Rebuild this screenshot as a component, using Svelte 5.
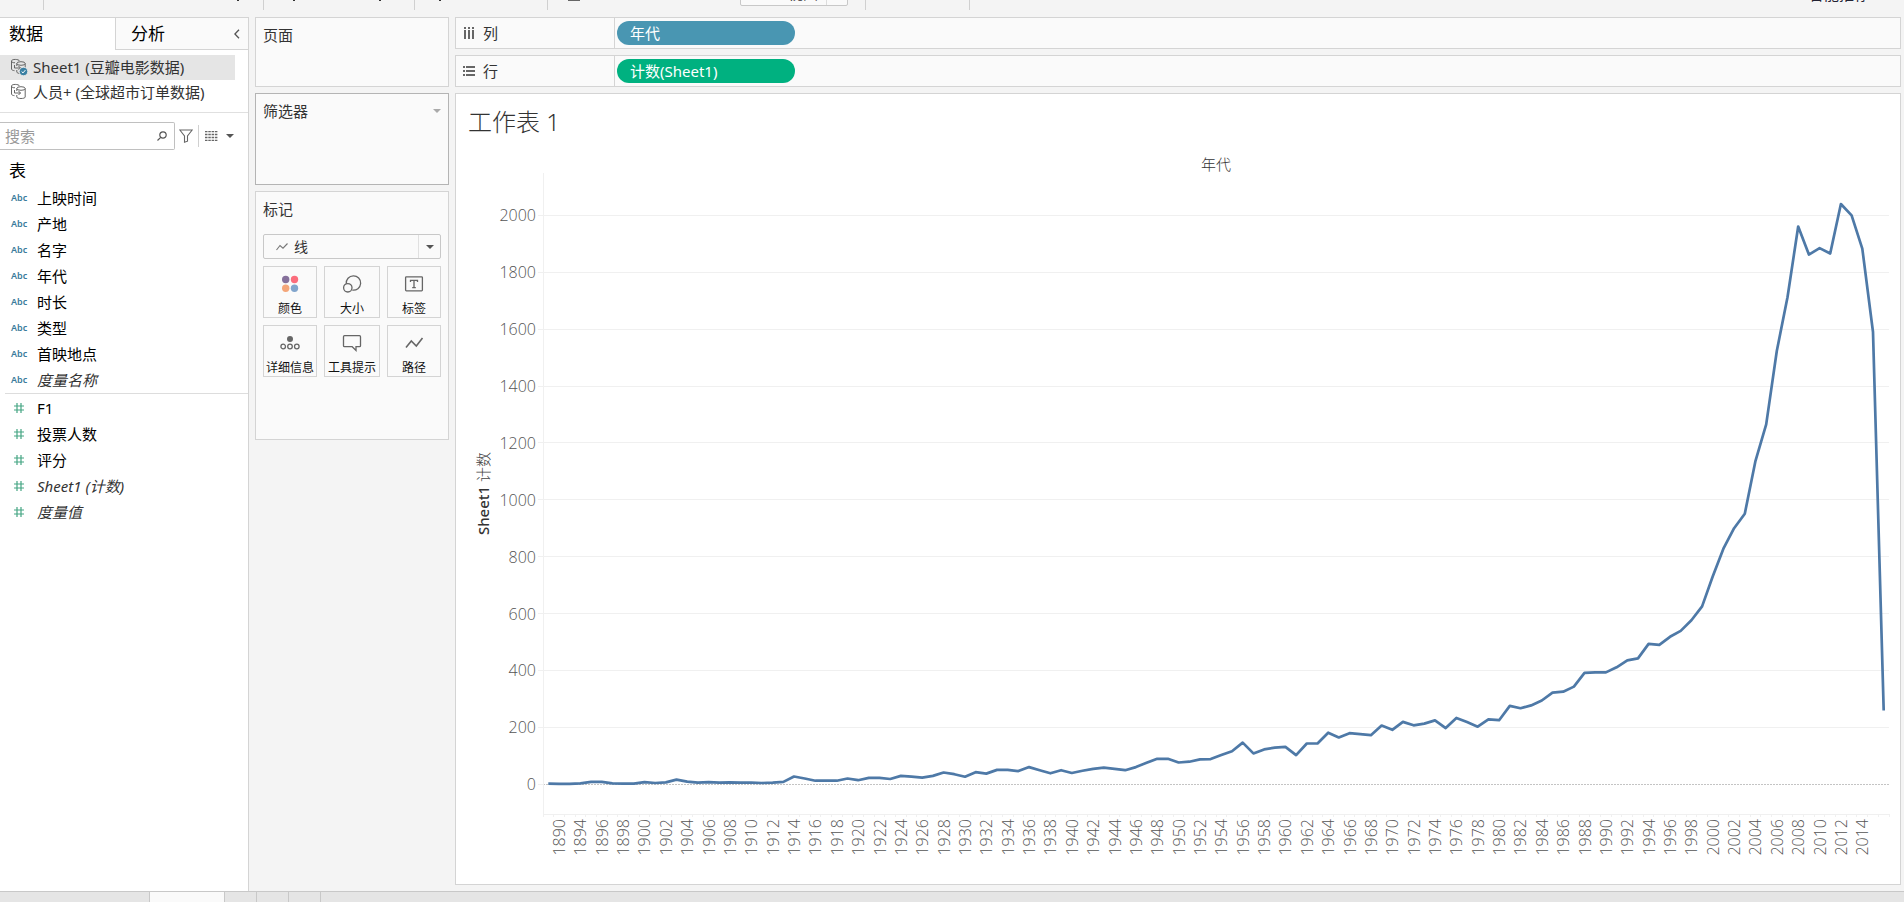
<script>
  const dimensions = ['上映时间', '产地', '名字', '年代', '时长', '类型', '首映地点'];
  const measures = ['F1', '投票人数', '评分'];
  const generated = ['Sheet1 (计数)', '度量值'];
  const marks = [
    ['color', '颜色'], ['size', '大小'], ['label', '标签'],
    ['detail', '详细信息'], ['tooltip', '工具提示'], ['path', '路径']
  ];

  const counts = [
    2, 1, 1, 3, 8, 8, 3, 2, 2, 7, 4, 6, 16, 9, 5, 7, 5, 6, 5, 5, 4, 5, 8, 27, 20, 12, 12, 12, 20, 14,
    22, 22, 18, 29, 26, 23, 29, 41, 35, 26, 42, 37, 50, 50, 46, 60, 49, 38, 49, 39, 47, 54, 58, 54,
    49, 60, 75, 89, 89, 76, 79, 87, 88, 102, 116, 146, 108, 122, 128, 131, 102, 143, 143, 181, 164,
    179, 176, 172, 206, 191, 219, 207, 213, 224, 197, 233, 218, 202, 228, 225, 275, 267, 277, 294,
    322, 325, 343, 391, 393, 393, 411, 435, 442, 493, 490, 518, 539, 576, 625, 730, 828, 900, 951,
    1137, 1265, 1523, 1712, 1961, 1862, 1885, 1866, 2040, 2000, 1883, 1590, 259
  ];
  const years = [1890, ...Array.from({ length: 61 }, (_, i) => 1894 + i * 2)];
  const levels = Array.from({ length: 11 }, (_, i) => i * 200);
  const MIN = -105;
  const MAX = 2149;
  const top = 27;
  const left = 87;

  let width = $state(1444);
  let height = $state(737);
  const right = $derived(width - 11);
  const bottom = $derived(height - 70);
  const step = $derived((right - left) / counts.length);
  const px = (i) => left + step * i;
  const py = (v) => bottom - ((v - MIN) / (MAX - MIN)) * (bottom - top);
  const crisp = (n) => Math.floor(n) + 0.5;
  const line = $derived(counts.map((v, i) => `${px(i + 0.5).toFixed(1)},${py(v).toFixed(1)}`).join(' '));
</script>

{#snippet source(active)}
  <svg class="icon" width="18" height="18" viewBox="0 0 18 18" fill="none" stroke="#666" aria-hidden="true">
    <path d="M9.500 3C9 1 1.500.800 1.500 3v8c0 1 1.500 1.500 3 1.700M1.500 3c0 1.600 2 1.900 3.500 1.700" />
    <ellipse cx="11" cy="5.500" rx="4.200" ry="1.800" />
    <path d="M6.800 5.500V8M6.800 12v2c0 2 8.400 2 8.400 0V5.500" />
    <path d="M4.500 7v3h6M8.500 8l2 2-2 2" />
    {#if active}
      <circle cx="13.500" cy="13.500" r="4.300" fill="#3a80a3" stroke="#e5e5e5" />
      <path d="M11.600 13.500l1.400 1.400 2.400-2.800" stroke="#fff" />
    {/if}
  </svg>
{/snippet}

{#snippet hash()}
  <svg class="icon" width="10" height="10" viewBox="0 0 10 10" stroke="#45a583" stroke-width="1.200" aria-hidden="true">
    <path d="M3 0v10M7 0v10M0 3h10M0 7h10" />
  </svg>
{/snippet}

<div class="app">
  <header class="toolbar">
    <div class="group g1"></div>
    <div class="group g2"><i class="tip"></i></div>
    <div class="group g3"><i class="tip"></i><i class="tip"></i></div>
    <div class="group g4"><i class="tip"></i></div>
    <div class="group g5"><i class="tip wide"></i><button class="fit"><span>整个视图</span><b></b></button></div>
    <div class="group g6"></div>
    <span class="show">智能推荐</span>
  </header>

  <main>
    <aside class="data">
      <div class="tabs">
        <button class="tab on">数据</button>
        <button class="tab">分析
          <svg width="6" height="10" viewBox="0 0 6 10" fill="none" stroke="#555" stroke-width="1.300"><path d="M5 .8.900 5 5 9.200" /></svg>
        </button>
      </div>
      <ul class="sources">
        <li class="sel">{@render source(true)}<span>Sheet1 (豆瓣电影数据)</span></li>
        <li>{@render source(false)}<span>人员+ (全球超市订单数据)</span></li>
      </ul>
      <div class="find">
        <label class="search">
          <input type="text" placeholder="搜索" aria-label="搜索" />
          <svg width="10" height="10" viewBox="0 0 10 10" fill="none" stroke="#555" stroke-width="1.200"><circle cx="6" cy="4" r="3.200" /><path d="M3.700 6.300.500 9.500" /></svg>
        </label>
        <button class="plain" aria-label="筛选">
          <svg width="14" height="14" viewBox="0 0 14 14" fill="none" stroke="#666" stroke-width="1.100"><path d="M.8 1h12.400L8.500 7v5.200l-3 1V7z" /></svg>
        </button>
        <button class="plain view" aria-label="查看">
          <svg width="13" height="10" viewBox="0 0 13 10" fill="none" stroke="#666" stroke-dasharray="2.500 .8"><path d="M0 .5h13M0 3.500h13M0 6.500h13M0 9.500h13" stroke-width="1.300" /></svg>
          <i class="caret"></i>
        </button>
      </div>
      <h2>表</h2>
      <ul class="fields">
        {#each dimensions as name}<li><span class="abc">Abc</span>{name}</li>{/each}
        <li class="gen"><span class="abc">Abc</span><em>度量名称</em></li>
      </ul>
      <ul class="fields second">
        {#each measures as name}<li><span class="abc">{@render hash()}</span>{name}</li>{/each}
        {#each generated as name}<li class="gen"><span class="abc">{@render hash()}</span><em>{name}</em></li>{/each}
      </ul>
    </aside>

    <section class="cards">
      <div class="card pages"><h3>页面</h3></div>
      <div class="card filters"><h3>筛选器</h3><i class="caret light"></i></div>
      <div class="card marks">
        <h3>标记</h3>
        <div class="type">
          <svg width="12" height="8" viewBox="0 0 12 8" fill="none" stroke="#777" stroke-width="1.100"><path d="M.5 7 4 2.500l3 2.700L11.500.500" /></svg>
          <select aria-label="标记类型"><option>线</option></select>
          <span class="drop"><i class="caret"></i></span>
        </div>
        <div class="grid">
          {#each marks as [kind, label]}
            <button class="mark">
              <svg width="20" height="20" viewBox="0 0 20 20" fill="none" stroke="#666" stroke-width="1.300" aria-hidden="true">
                {#if kind === 'color'}
                  <g stroke="none"><circle cx="5.700" cy="5.500" r="3.700" fill="#85709b" /><circle cx="14.500" cy="5.500" r="3.700" fill="#fb6d7c" /><circle cx="5.700" cy="14.300" r="3.700" fill="#f4a679" /><circle cx="14.500" cy="14.300" r="3.700" fill="#81a5cc" /></g>
                {:else if kind === 'size'}
                  <path d="M4.300 9.800a7.200 7.200 0 1 1 6 6.300" /><circle cx="5.800" cy="13.800" r="4.200" />
                {:else if kind === 'label'}
                  <rect x="1.600" y="2.800" width="16.800" height="14" rx=".8" /><path d="M6.500 8V6.300h7V8M10 6.300v7.400M8.200 13.700h3.600" />
                {:else if kind === 'detail'}
                  <circle cx="10" cy="6" r="3" fill="#666" stroke="none" /><circle cx="3.200" cy="13.500" r="2.300" /><circle cx="10" cy="13.500" r="2.300" /><circle cx="16.800" cy="13.500" r="2.300" />
                {:else if kind === 'tooltip'}
                  <path d="M2.500 2.700h15q1 0 1 1v9q0 1-1 1H14V17.500l-3.800-3.800H2.500q-1 0-1-1v-9q0-1 1-1z" />
                {:else}
                  <path d="M2 14.500 7.300 8l5 5 6.200-8" stroke-width="1.600" />
                {/if}
              </svg>
              {label}
            </button>
          {/each}
        </div>
      </div>
    </section>

    <section class="work">
      <div class="shelf">
        <div class="name">
          <svg width="12" height="12" viewBox="0 0 12 12" fill="#666"><path d="M1 0h2v2H1zM5 0h2v2H5zM9 0h2v2H9zM1 3h2v9H1zM5 3h2v9H5zM9 3h2v9H9z" /></svg>列
        </div>
        <button class="pill blue">年代</button>
      </div>
      <div class="shelf">
        <div class="name">
          <svg width="12" height="12" viewBox="0 0 12 12" fill="#666"><path d="M0 1h2v2H0zM0 5h2v2H0zM0 9h2v2H0zM3 1h9v2H3zM3 5h9v2H3zM3 9h9v2H3z" /></svg>行
        </div>
        <button class="pill green">计数(Sheet1)</button>
      </div>
      <div class="sheet">
        <h1>工作表 1</h1>
        <div class="plot" bind:clientWidth={width} bind:clientHeight={height}>
          <svg {width} {height} role="img" aria-label="年代">
            <text class="head" x={(left + right) / 2} y="24" text-anchor="middle">年代</text>
            <text class="side" text-anchor="middle" transform="translate(33 {(top + bottom) / 2}) rotate(-90)"><tspan class="strong">Sheet1</tspan> 计数</text>
            {#each levels as v}
              {#if v > 0}<path class="rule" d="M{left} {crisp(py(v))}H{right}" />{/if}
              <path class="rule" d="M{left - 5} {crisp(py(v))}h5" />
              <text class="num" x={left - 7} y={Math.round(py(v)) + 6} text-anchor="end">{v}</text>
            {/each}
            <path class="zero" d="M{left} {crisp(py(0))}H{right}" />
            <path class="axis" d="M{left + 0.5} {top}V{bottom + 3}M{left} {bottom + 0.5}H{right}" />
            {#each counts as _, i}<path class="axis" d="M{crisp(px(i + 1))} {bottom}v3" />{/each}
            {#each years as year, k}
              <text class="num" text-anchor="end" transform="translate({Math.round(px(k * 2 + 1.5)) + 6} {bottom + 5}) rotate(-90)">{year}</text>
            {/each}
            <polyline class="line" points={line} />
          </svg>
        </div>
      </div>
    </section>
  </main>

  <footer>
    <button class="s1" aria-label="数据源"></button>
    <button class="s2" aria-label="工作表 1"></button>
    <button class="s3" aria-label="新建工作表"></button>
    <button class="s3" aria-label="新建仪表板"></button>
    <button class="s3" aria-label="新建故事"></button>
  </footer>
</div>

<style>
  :global(body) { margin: 0; }
  .app {
    display: flex; flex-direction: column; min-height: 100vh; overflow: hidden;
    background: #f4f4f4; color: #333;
    font: 15px/24px "Noto Sans", "Noto Sans CJK SC", sans-serif;
  }
  .app, .app * { box-sizing: border-box; }
  h1, h2, h3, ul { margin: 0; padding: 0; font-weight: 400; list-style: none; }
  button { font: inherit; color: inherit; border: 0; padding: 0; margin: 0; background: none; text-align: left; }
  svg { display: block; flex: none; }
  .caret { border: 4px solid transparent; border-top-color: #555; border-bottom: 0; width: 0; height: 0; }
  .caret.light { border-top-color: #aaa; }

  .toolbar { display: flex; height: 17px; overflow: hidden; }
  .group { height: 10px; border-right: 1px solid #d0d0d0; display: flex; flex: none; align-items: flex-start; }
  .g1 { width: 44px; }
  .g2 { width: 220px; justify-content: flex-end; padding-right: 24px; }
  .g3 { width: 151px; gap: 84px; padding-left: 29px; }
  .g4 { width: 133px; padding-left: 24px; }
  .g5 { width: 318px; padding-left: 20px; }
  .g6 { width: 104px; }
  .tip { width: 2px; height: 1px; background: #333; }
  .tip.wide { width: 12px; background: #666; }
  .fit {
    display: flex; align-items: flex-end; height: 28px; width: 108px; margin: -22px 0 0 160px; padding-left: 17px;
    border: 1px solid #c8c8c8; border-radius: 2px; background: #fafafa;
  }
  .fit span { flex: none; width: 68px; line-height: 24px; }
  .fit b { width: 1px; height: 26px; background: #ddd; }
  .show { margin: -18px 35px 0 auto; color: #223; }

  main { flex: 1; display: flex; gap: 6px; padding-right: 3px; }
  .data { width: 249px; flex: none; background: #fff; border: solid #d4d4d4; border-width: 1px 1px 0 0; }
  .tabs { display: flex; height: 32px; }
  .tab {
    flex: 1; display: flex; justify-content: space-between; align-items: center; padding: 0 8px 0 15px;
    font-size: 17px; color: #000; background: #fafafa; border: solid #d4d4d4; border-width: 0 0 1px 1px;
  }
  .tab.on { flex: 0 0 115px; padding: 0 9px; background: #fff; border: 0; }
  .sources { padding: 5px 13px 7px 0; border-bottom: 1px solid #e0e0e0; }
  .sources li { display: flex; align-items: center; gap: 5px; height: 25px; padding: 0 0 2px 10px; white-space: nowrap; }
  .sources .sel { background: #e5e5e5; }
  .find { display: flex; align-items: center; padding-top: 9px; height: 37px; }
  .search { display: flex; align-items: center; width: 175px; height: 28px; padding-right: 7px; background: #fff; border: 1px solid #c0c0c0; border-left: 0; border-radius: 0 2px 2px 0; }
  .search input { flex: 1; min-width: 0; border: 0; outline: 0; padding: 0 5px; font: inherit; background: none; }
  .search input::placeholder { color: #999; opacity: 1; }
  .plain { display: flex; align-items: center; padding: 0 5px 0 4px; height: 22px; }
  .view { border-left: 1px solid #d0d0d0; padding-left: 6px; gap: 8px; }
  .data h2 { font-size: 17px; line-height: 24px; padding: 9px 9px 2px; color: #000; }
  .fields li { display: flex; align-items: center; height: 26px; padding-left: 11px; color: #000; }
  .fields .gen { color: #333; }
  .fields.second { margin-left: 5px; padding-top: 1px; border-top: 1px solid #ddd; }
  .second li { padding-left: 6px; }
  .abc { width: 26px; font-size: 9px; font-weight: 600; color: #3a7b9b; }
  .second .abc { padding-left: 3px; }

  .cards { width: 194px; flex: none; display: flex; flex-direction: column; gap: 6px; }
  .card { background: #fafafa; border: 1px solid #d4d4d4; padding: 5px 7px; }
  .card h3 { font-size: 15px; line-height: 24px; }
  .pages { height: 70px; }
  .filters { height: 92px; border-color: #b4b4b4; display: flex; justify-content: space-between; }
  .filters .caret { margin-top: 10px; }
  .marks { height: 249px; }
  .type { display: flex; align-items: center; height: 25px; margin: 13px 0 7px; padding-left: 12px; border: 1px solid #c8c8c8; border-radius: 2px; }
  .type select { flex: 1; height: 23px; appearance: none; border: 0; padding: 0 6px; background: none; color: inherit; font: inherit; font-size: 14px; }
  .drop { display: flex; align-items: center; justify-content: center; width: 22px; height: 23px; border-left: 1px solid #e0e0e0; }
  .grid { display: grid; grid-template-columns: 54fr 56fr 54fr; gap: 7px; }
  .mark {
    display: flex; flex-direction: column; align-items: center; justify-content: space-between; height: 52px; padding: 7px 0 0;
    border: 1px solid #d4d4d4; font-size: 12px; line-height: 16px; color: #111; white-space: nowrap;
  }

  .work { flex: 1; min-width: 0; display: flex; flex-direction: column; gap: 6px; padding-bottom: 6px; }
  .shelf { display: flex; align-items: center; height: 32px; background: #fafafa; border: 1px solid #d4d4d4; }
  .name { display: flex; align-items: center; gap: 8px; width: 159px; height: 30px; padding-left: 7px; border-right: 1px solid #d4d4d4; }
  .pill { width: 178px; height: 24px; margin-left: 2px; padding-left: 13px; border-radius: 12px; color: #fff; }
  .blue { background: #4996b2; }
  .green { background: #00b180; }
  .sheet { flex: 1; display: flex; flex-direction: column; background: #fff; border: 1px solid #d4d4d4; }
  h1 { font-size: 24px; line-height: 32px; padding: 12px 12px 8px; font-weight: 300; }
  .plot { flex: 1 0 auto; min-height: 400px; position: relative; overflow: hidden; }
  .plot > svg { position: absolute; }
  .rule { stroke: #f0f0f0; }
  .axis { stroke: #f0f0f0; fill: none; }
  .zero { stroke: #c4c4c4; stroke-dasharray: 2 1; }
  .line { fill: none; stroke: #4e79a7; stroke-width: 2.700; stroke-linejoin: round; stroke-linecap: butt; }
  .num { font: 300 16px "Open Sans", "Noto Sans", sans-serif; fill: #555; }
  .head { font-size: 15px; font-weight: 300; fill: #333; }
  .side { font-size: 15px; font-weight: 300; fill: #444; }
  .strong { font-weight: 500; fill: #333; }

  footer { display: flex; height: 11px; background: #e5e5e5; border-top: 1px solid #c8c8c8; }
  footer button { border-right: 1px solid #c8c8c8; }
  .s1 { width: 150px; }
  .s2 { width: 75px; background: #fafafa; }
  .s3 { width: 32px; }
</style>
